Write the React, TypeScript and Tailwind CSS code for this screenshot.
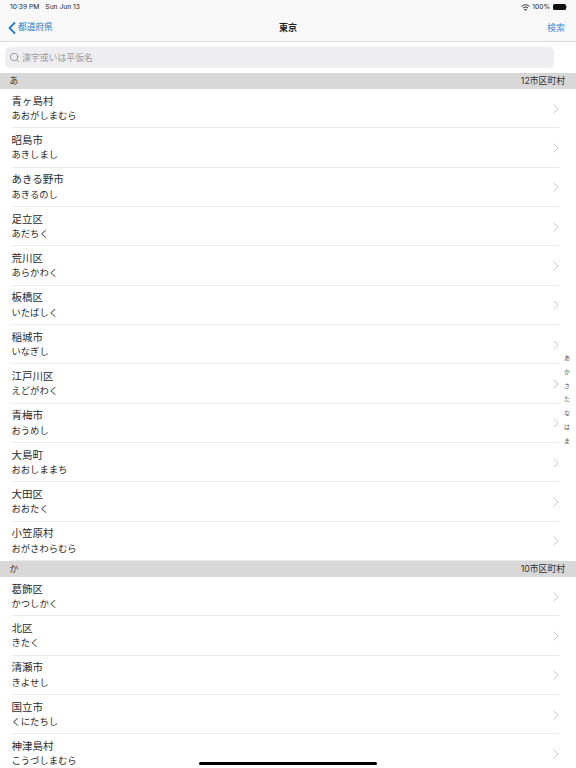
import { ChevronLeft, ChevronRight, Search } from "lucide-react";

const sections = [
  {
    kana: "あ",
    count: "12市区町村",
    rows: [
      ["青ヶ島村", "あおがしまむら"],
      ["昭島市", "あきしまし"],
      ["あきる野市", "あきるのし"],
      ["足立区", "あだちく"],
      ["荒川区", "あらかわく"],
      ["板橋区", "いたばしく"],
      ["稲城市", "いなぎし"],
      ["江戸川区", "えどがわく"],
      ["青梅市", "おうめし"],
      ["大島町", "おおしままち"],
      ["大田区", "おおたく"],
      ["小笠原村", "おがさわらむら"],
    ],
  },
  {
    kana: "か",
    count: "10市区町村",
    rows: [
      ["葛飾区", "かつしかく"],
      ["北区", "きたく"],
      ["清瀬市", "きよせし"],
      ["国立市", "くにたちし"],
      ["神津島村", "こうづしまむら"],
    ],
  },
];

const indexKana = ["あ", "か", "さ", "た", "な", "は", "ま"];

function Row({ name, reading }: { name: string; reading: string }) {
  return (
    <div className="ml-3 mr-[17px] flex h-[39.33px] items-center justify-between border-b border-[#ebebed]">
      <div className="-ml-[0.5px] flex flex-col pt-[2px] leading-[14.5px] text-[#2a2a2a]">
        <span className="text-[10.5px]">{name}</span>
        <span className="text-[9.3px]">{reading}</span>
      </div>
      <ChevronRight size={16} strokeWidth={1.4} className="-mr-[5px] mt-[1px] text-[#c6c6c9]" />
    </div>
  );
}

export default function App() {
  return (
    <div className="relative h-[768px] w-[576px] overflow-hidden bg-white font-['Inter','Noto_Sans_CJK_JP',sans-serif]">
      <header className="flex h-[42px] flex-col border-b border-[#dcdcde] bg-[#f8f8f8]">
        <div className="flex h-[14px] items-center justify-between pl-[10px] pr-[9px] pt-[1px] text-[6.7px] text-[#222]">
          <div className="flex gap-[6px]">
            <span>10:39 PM</span>
            <span>Sun Jun 13</span>
          </div>
          <div className="flex items-center gap-[2.5px]">
            <svg width="9" height="7" viewBox="0 0 18 14" fill="none" stroke="#222" strokeWidth="2">
              <path d="M1 5 C5.5 0.5 12.5 0.5 17 5" />
              <path d="M4 8.2 C7 5.4 11 5.4 14 8.2" />
              <path d="M9 13.5 L6.4 10.8 C8 9.6 10 9.6 11.6 10.8 Z" fill="#222" stroke="none" />
            </svg>
            <span>100%</span>
            <div className="flex items-center">
              <div className="h-[6px] w-[13px] rounded-[1.5px] bg-[#111]" />
              <div className="ml-[0.5px] h-[2px] w-[1px] bg-[#999]" />
            </div>
          </div>
        </div>
        <nav className="relative flex flex-1 items-center justify-between pl-[2px] pr-[11px]">
          <div className="flex items-center text-[8.7px] text-[#2a7bc4]">
            <ChevronLeft size={20} strokeWidth={2.2} />
            <span className="-ml-[4px]">都道府県</span>
          </div>
          <span className="absolute left-0 right-0 text-center text-[9px] font-semibold text-[#222]">
            東京
          </span>
          <span className="text-[9px] text-[#3f8fd6]">検索</span>
        </nav>
      </header>

      <div className="pb-[5px] pl-[5px] pr-[22px] pt-[5px]">
        <div className="flex h-[21px] items-center gap-[2px] rounded-[5px] bg-[#eeeef0] pl-[4px] text-[8.9px] text-[#9a9a9e]">
          <Search size={11} strokeWidth={1.75} className="text-[#86868b]" />
          <span>漢字或いは平仮名</span>
        </div>
      </div>

      {sections.map((section) => (
        <section key={section.kana}>
          <div className="flex h-[16px] items-center justify-between bg-[#d8d8d8] pl-[9.5px] pr-[11px] text-[8.8px] text-[#333]">
            <span>{section.kana}</span>
            <span>{section.count}</span>
          </div>
          {section.rows.map(([name, reading]) => (
            <Row key={name} name={name} reading={reading} />
          ))}
        </section>
      ))}

      <div className="absolute right-[6px] top-[351px] flex flex-col items-center text-[6px] leading-[13.8px] text-[#555]">
        {indexKana.map((k) => (
          <span key={k}>{k}</span>
        ))}
      </div>

      <div className="absolute bottom-[3px] left-[199px] h-[3px] w-[178px] rounded-full bg-black" />
    </div>
  );
}
